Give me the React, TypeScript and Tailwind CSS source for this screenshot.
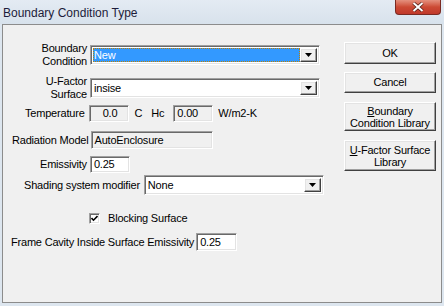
import React from "react";

const sunken =
  "border-t border-l border-t-[#a0a0a0] border-l-[#a0a0a0] border-b border-r border-b-white border-r-white shadow-[inset_1px_1px_0_#696969,inset_-1px_-1px_0_#e3e3e3]";
const raised =
  "bg-[#f0f0f0] border-t border-l border-t-white border-l-white border-b border-r border-b-[#404040] border-r-[#404040] shadow-[inset_-1px_-1px_0_#a0a0a0,inset_1px_1px_0_#e3e3e3]";

function DropArrow() {
  return (
    <div className={`w-[17px] h-full flex items-center justify-center ${raised}`}>
      <svg width="7" height="4" viewBox="0 0 7 4">
        <path d="M0 0h7L3.5 4z" fill="#000" />
      </svg>
    </div>
  );
}

function Select({ value, active, width }: { value: string; active?: boolean; width: string }) {
  return (
    <div className={`flex h-[20px] ${width} bg-white p-[2px] pl-[2px] ${sunken}`}>
      <div
        className={`flex-1 flex items-center pl-[1px] ${
          active ? "bg-[#3399ff] text-white outline-1 outline-dotted outline-[#c08000] -outline-offset-1" : ""
        }`}
      >
        {value}
      </div>
      <DropArrow />
    </div>
  );
}

function Box({ value, width, height, disabled, center }: { value: string; width: string; height: string; disabled?: boolean; center?: boolean }) {
  return (
    <div
      className={`flex items-center pl-[3px] ${width} ${height} ${disabled ? "bg-[#f0f0f0]" : "bg-white"} ${
        center ? "justify-center pl-0" : ""
      } ${sunken}`}
    >
      {value}
    </div>
  );
}

export default function App() {
  return (
    <div
      className="w-[444px] h-[306px] bg-[#dde6ef] text-[11px] tracking-[-0.2px] whitespace-nowrap text-black overflow-hidden"
      style={{ fontFamily: '"Liberation Sans", Arial, sans-serif' }}
    >
      <div className="relative h-[24px] bg-gradient-to-b from-[#e4ebf3] to-[#d8e2ec]">
        <div className="pl-[3px] pt-[4px] text-[12px] tracking-normal text-[#1c1c3a]">Boundary Condition Type</div>
        <div className="absolute right-[3px] top-0 w-[46px] h-[15px] rounded-b-[4px] border border-t-0 border-[#7a2a22] bg-gradient-to-b from-[#e4907e] via-[#cc4a34] to-[#c0392b] flex items-center justify-center">
          <svg width="12" height="10" viewBox="0 0 12 10">
            <path d="M1.5 1 L10.5 9 M10.5 1 L1.5 9" stroke="#4a1a14" strokeWidth="3.4" />
            <path d="M1.5 1 L10.5 9 M10.5 1 L1.5 9" stroke="#ffffff" strokeWidth="2" />
          </svg>
        </div>
      </div>

      <div className="ml-[2px] w-[440px] h-[279px] bg-[#f0f0f0] border border-[#8c8c8c] flex">
        <div className="flex flex-col w-[340px] shrink-0">
          <div className="mt-[20px] flex items-center h-[20px]">
            <div className="w-[84px] shrink-0 text-right leading-[13px]">
              Boundary
              <br />
              Condition
            </div>
            <div className="ml-[3px]">
              <Select value="New" active width="w-[230px]" />
            </div>
          </div>

          <div className="mt-[13px] flex items-center h-[20px]">
            <div className="w-[84px] shrink-0 text-right leading-[13px]">
              U-Factor
              <br />
              Surface
            </div>
            <div className="ml-[3px]">
              <Select value="insise" width="w-[230px]" />
            </div>
          </div>

          <div className="mt-[7px] flex items-center h-[17px] pl-[22px]">
            <div>Temperature</div>
            <div className="ml-[4px]">
              <Box value="0.0" width="w-[40px]" height="h-[17px]" disabled center />
            </div>
            <div className="ml-[6px]">C</div>
            <div className="ml-[9px]">Hc</div>
            <div className="ml-[9px]">
              <Box value="0.00" width="w-[40px]" height="h-[17px]" disabled />
            </div>
            <div className="ml-[5px]">W/m2-K</div>
          </div>

          <div className="mt-[9px] flex items-center h-[18px] pl-[9px]">
            <div>Radiation Model</div>
            <div className="ml-[2px]">
              <Box value="AutoEnclosure" width="w-[122px]" height="h-[18px]" disabled />
            </div>
          </div>

          <div className="mt-[7px] flex items-center h-[17px] pl-[37px]">
            <div>Emissivity</div>
            <div className="ml-[3px]">
              <Box value="0.25" width="w-[40px]" height="h-[17px]" />
            </div>
          </div>

          <div className="mt-[2px] flex items-center h-[20px] pl-[21px]">
            <div>Shading system modifier</div>
            <div className="ml-[4px]">
              <Select value="None" width="w-[180px]" />
            </div>
          </div>

          <div className="mt-[18px] flex items-center h-[11px] pl-[86px]">
            <div className={`w-[11px] h-[11px] bg-white flex items-center justify-center ${sunken}`}>
              <svg width="7" height="7" viewBox="0 0 7 7">
                <path d="M0.5 3 L2.5 5.2 L6.5 1" stroke="#000" strokeWidth="1.6" fill="none" />
              </svg>
            </div>
            <div className="ml-[8px]">Blocking Surface</div>
          </div>

          <div className="mt-[9px] flex items-center h-[18px] pl-[8px]">
            <div>Frame Cavity Inside Surface Emissivity</div>
            <div className="ml-[2px]">
              <Box value="0.25" width="w-[41px]" height="h-[18px]" />
            </div>
          </div>
        </div>

        <div className="flex flex-col ml-[1px] w-[92px]">
          <button className={`mt-[17px] h-[22px] ${raised}`}>OK</button>
          <button className={`mt-[8px] h-[21px] ${raised}`}>Cancel</button>
          <button className={`mt-[9px] h-[29px] leading-[12px] ${raised}`}>
            <span className="underline">B</span>oundary
            <br />
            Condition Library
          </button>
          <button className={`mt-[9px] h-[31px] leading-[12px] ${raised}`}>
            <span className="underline">U</span>-Factor Surface
            <br />
            Library
          </button>
        </div>
      </div>
    </div>
  );
}
